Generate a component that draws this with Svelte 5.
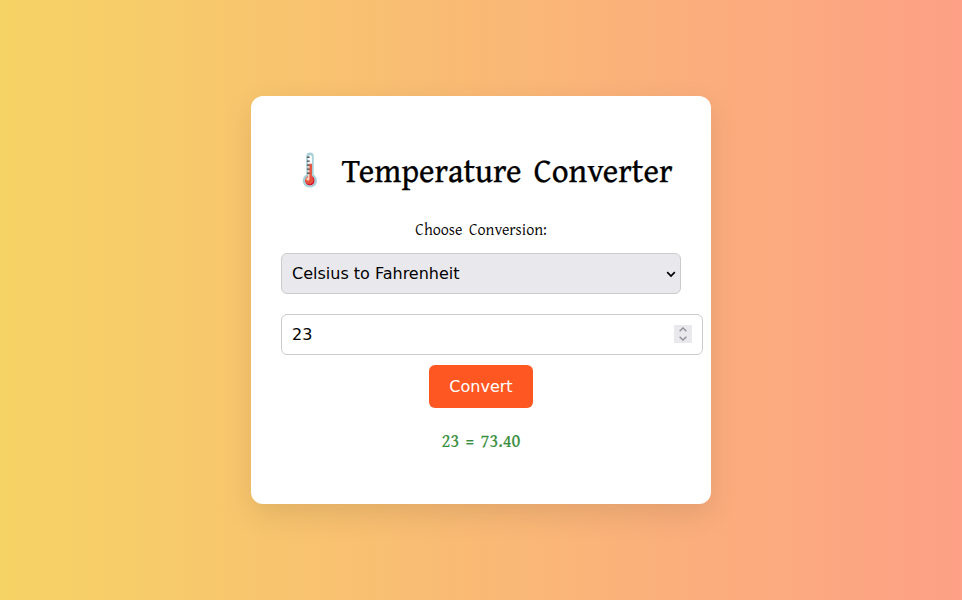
<script>
  let mode = $state('cf');
  let value = $state(23);
  let converted = $state('23 = 73.40');
  function convert() {
    const result = mode === 'cf' ? value * 1.8 + 32 : (value - 32) / 1.8;
    converted = `${value} = ${result.toFixed(2)}`;
  }
  function step(amount) {
    value += amount;
  }
</script>

<main>
  <section class="card">
    <h1><span class="icon">🌡️</span> Temperature Converter</h1>
    <label for="mode">Choose Conversion:</label>
    <div class="select">
      <select id="mode" bind:value={mode}>
        <option value="cf">Celsius to Fahrenheit</option>
        <option value="fc">Fahrenheit to Celsius</option>
      </select>
      <svg class="arrow" width="10" height="7" viewBox="0 0 10 7"><path d="M1.2 1.2 5 5l3.8-3.8" fill="none" stroke="#000" stroke-width="1.7" /></svg>
    </div>
    <div class="number">
      <input type="number" aria-label="Temperature" bind:value />
      <span class="spinner">
        <button aria-label="Increase" onclick={() => step(1)}><svg width="8" height="5" viewBox="0 0 8 5"><path d="M.6 4.2 4 1l3.4 3.2" /></svg></button>
        <button aria-label="Decrease" onclick={() => step(-1)}><svg width="8" height="5" viewBox="0 0 8 5"><path d="M.6.8 4 4 7.4.8" /></svg></button>
      </span>
    </div>
    <button class="convert" onclick={convert}>Convert</button>
    <p class="result">{converted}</p>
  </section>
</main>

<style>
  :global(body) { margin: 0; }
  main {
    height: 100vh;
    display: flex;
    align-items: center;
    justify-content: center;
    background: linear-gradient(to right, #f6d365, #fda085);
    font-family: 'Gentium Book Plus', 'Noto Serif', 'Liberation Serif', serif;
  }
  .card {
    box-sizing: border-box;
    width: 460px;
    height: 408px;
    padding: 49px 30px 0;
    border-radius: 12px;
    background: #fff;
    box-shadow: 0 10px 30px rgba(0, 0, 0, .1);
    display: flex;
    flex-direction: column;
    align-items: center;
  }
  h1 { margin: 0 0 22px; height: 50px; font-size: 33px; line-height: 50px; font-weight: 500; word-spacing: 5px; white-space: nowrap; -webkit-text-stroke: .25px #000; }
  .icon { display: inline-block; font-size: 32px; line-height: 1; transform: translate(1px, -1px); -webkit-text-stroke: 0; }
  label { font-family: 'Gentium Plus', 'Noto Serif', 'Liberation Serif', serif; font-size: 16px; line-height: 24px; margin-bottom: 12px; word-spacing: 3px; }
  .select, .number {
    position: relative;
    box-sizing: border-box;
    height: 41px;
    flex: none;
    align-self: flex-start;
    border: 1px solid #ccc;
    border-radius: 6px;
  }
  .select { width: 400px; background: #e9e9ed; margin-bottom: 20px; }
  .number { width: 422px; margin-bottom: 10px; }
  select, input {
    appearance: none;
    box-sizing: border-box;
    display: block;
    width: 100%;
    height: 39px;
    margin: 0;
    padding: 0 10px;
    border: 0;
    outline: 0;
    background: transparent;
    color: #000;
    font: 16px 'DejaVu Sans', sans-serif;
  }
  input { appearance: textfield; border-radius: 6px; }
  .arrow { position: absolute; right: 4px; top: 17px; pointer-events: none; }
  .spinner {
    position: absolute;
    right: 10px;
    top: 10px;
    width: 18px;
    height: 18px;
    background: #e9e9ed;
    display: flex;
    flex-direction: column;
  }
  .spinner button { flex: 1; min-height: 0; padding: 0; border: 0; background: none; display: flex; align-items: center; justify-content: center; }
  .spinner path { fill: none; stroke: #92929b; stroke-width: 1.5; }
  .convert {
    flex: none;
    width: 104px;
    height: 43px;
    padding: 0;
    border: 0;
    border-radius: 6px;
    background: #ff5722;
    color: #fff;
    font: 16px 'DejaVu Sans', sans-serif;
  }
  .result { margin: 20px 0 0; font-size: 18.4px; line-height: 26px; font-weight: 500; word-spacing: 2.5px; color: #388e3c; -webkit-text-stroke: .15px #388e3c; }
</style>
